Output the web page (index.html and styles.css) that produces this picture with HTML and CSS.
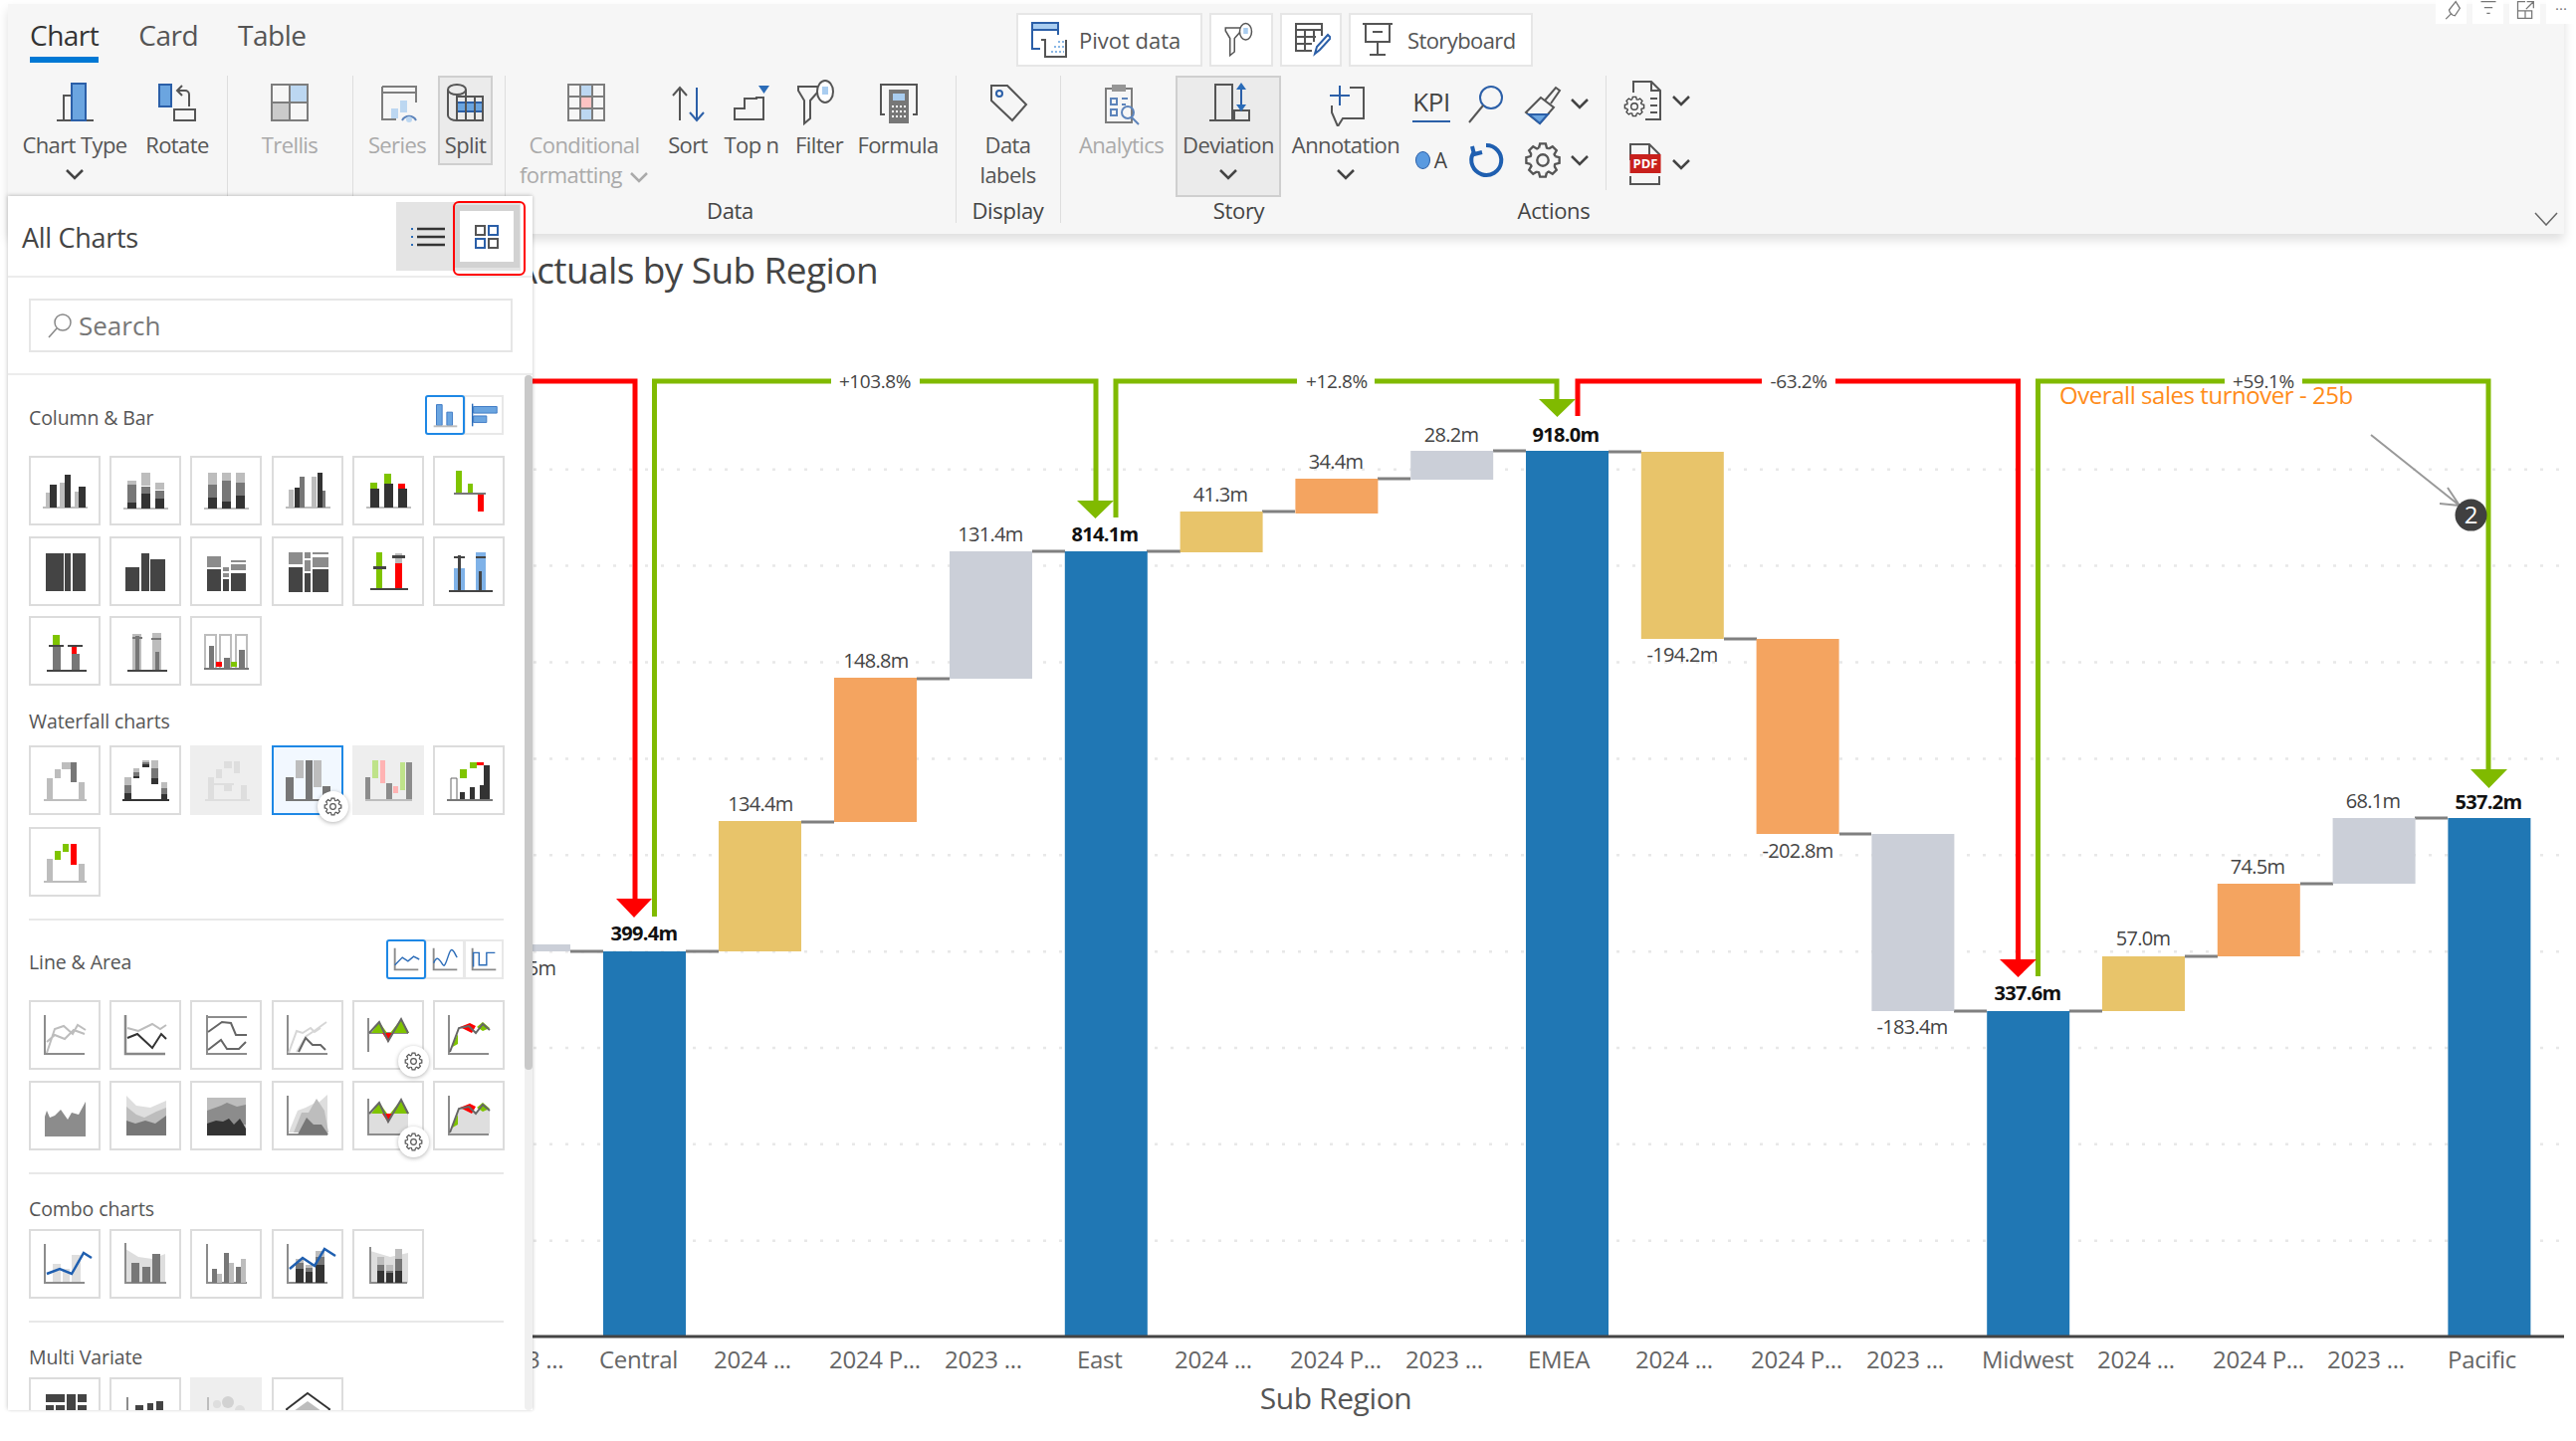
FILE: index.html
```html
<!DOCTYPE html>
<html lang="en">
<head>
<meta charset="utf-8">
<title>Actuals by Sub Region</title>
<link rel="stylesheet" href="styles.css">
</head>
<body>
<svg class="defs" aria-hidden="true">
  <symbol id="gear" viewBox="-12 -12 24 24">
    <path id="gt" d="M-2.5-7.8L-1.8-10.5H1.8L2.5-7.8A8.2 8.2 0 0 1 3.75-7.28"/>
    <use href="#gt" transform="rotate(45)"/><use href="#gt" transform="rotate(90)"/><use href="#gt" transform="rotate(135)"/><use href="#gt" transform="rotate(180)"/><use href="#gt" transform="rotate(225)"/><use href="#gt" transform="rotate(270)"/><use href="#gt" transform="rotate(315)"/>
    <circle r="3.6"/>
  </symbol>
  <symbol id="chev" viewBox="0 0 20 12"><path d="M2 2l8 8 8-8"/></symbol>
  <symbol id="funnel" viewBox="0 0 48 48"><path class="ol" d="M3 8h22l-2 5-8 9v18l-6 5V22L3 12z"/><ellipse class="ws" cx="30" cy="13" rx="8" ry="11"/><rect class="fb" x="27" y="8" width="6" height="8"/></symbol>
</svg>

<div class="win-actions">
  <span class="win-btn"><svg viewBox="0 0 24 24"><path d="M5 23l6-6M9 12l8-10 5 8-6 9-3-1-3-3z"/></svg></span>
  <span class="win-btn"><svg viewBox="0 0 24 24"><path d="M3 2h18M7 9h10M10 16h4"/></svg></span>
  <span class="win-btn"><svg viewBox="0 0 24 24"><path d="M12 2H3v20h17V13H3M12 13v9M14 2h8v8M22 2l-9 9"/></svg></span>
  <span class="win-btn win-dots">•••</span>
</div>

<header class="ribbon">
  <div class="ribbon-top">
    <nav class="tabs">
      <a class="tab active">Chart</a>
      <a class="tab">Card</a>
      <a class="tab">Table</a>
    </nav>
    <div class="tools">
      <button class="tool tool-pivot">
        <svg class="ic-36" viewBox="0 0 36 36"><rect class="fb" x="1" y="1" width="26" height="8"/><path class="bs" d="M1 1h26v7H1zM1 8v19h8M27 8v5"/><path class="ol" d="M10 18h4v17h21V18"/><path class="dots" d="M20 30h13M23 25h10M27 20h6"/></svg>
        Pivot data
      </button>
      <button class="tool tool-ico"><svg class="ic-36" viewBox="0 0 48 48"><use href="#funnel"/></svg></button>
      <button class="tool tool-ico2">
        <svg class="ic-36" viewBox="0 0 36 36"><path class="ol" d="M1 2h26v6H1zM1 8v21h16M1 15h20M1 22h16M10 8v21M19 8v12M27 2v12"/><path class="bs" d="M20 32l2-7 11-12 3 3-11 12z"/></svg>
      </button>
      <button class="tool tool-story">
        <svg class="ic-36" viewBox="0 0 36 36"><path class="ol" d="M1 2h30M4 2v18h24V2M16 20v13M8 33h16M11 10h10"/></svg>
        Storyboard
      </button>
    </div>
  </div>

  <div class="ribbon-body">
    <section class="group g-type">
      <div class="items">
        <div class="item w122"><svg class="ic" viewBox="0 0 48 48"><path class="ol" d="M6 42h37M13 42V17h8"/><rect class="bl" x="21" y="5" width="14" height="37"/></svg><span class="lbl">Chart Type</span><svg class="chev"><use href="#chev"/></svg></div>
        <div class="item w84"><svg class="ic" viewBox="0 0 48 48"><rect class="bl" x="6" y="6" width="12" height="22"/><path class="ol" d="M36 28V16a4 4 0 0 0-4-4H24M29 7l-5 5 5 5"/><rect class="ol" x="21" y="31" width="21" height="11"/></svg><span class="lbl">Rotate</span></div>
      </div>
      <div class="glabel"></div>
    </section>
    <section class="group g-trellis">
      <div class="items">
        <div class="item dis w126"><svg class="ic" viewBox="0 0 48 48"><rect class="fb" x="24" y="6" width="18" height="18"/><rect class="fl" x="6" y="24" width="18" height="18"/><path class="ol" d="M6 6h36v36H6zM24 6v36M6 24h36"/></svg><span class="lbl">Trellis</span></div>
      </div>
      <div class="glabel"></div>
    </section>
    <section class="group g-series">
      <div class="items">
        <div class="item dis w82"><svg class="ic" viewBox="0 0 48 48"><path class="ol" d="M9 8h34v16M9 8v33h14M9 14h34"/><rect class="fb" x="18" y="30" width="7" height="10"/><rect class="fb" x="27" y="22" width="7" height="12"/><path class="bs" d="M29 42a8 8 0 0 1 14 0"/><circle class="fb" cx="36" cy="41" r="3"/></svg><span class="lbl">Series</span></div>
        <div class="item on w55"><svg class="ic" viewBox="0 0 48 48"><ellipse class="ol" cx="15" cy="11" rx="9" ry="5"/><path class="ol" d="M6 11v26a9 5 0 0 0 9 5M24 11v9"/><rect class="bl" x="15" y="24" width="26" height="9"/><path class="ol" d="M15 18h26v24H15zM24 18v24M33 18v24"/></svg><span class="lbl">Split</span></div>
      </div>
      <div class="glabel"></div>
    </section>
    <section class="group g-data">
      <div class="items">
        <div class="item dis w134"><svg class="ic" viewBox="0 0 48 48"><rect class="fb" x="20" y="6" width="12" height="12"/><rect class="fb" x="20" y="30" width="12" height="12"/><rect class="fh" x="20" y="18" width="12" height="12"/><path class="ol" d="M8 6h36v36H8zM20 6v36M32 6v36M8 18h36M8 30h36"/></svg><span class="lbl">Conditional</span><span class="lbl">formatting <svg class="chev inl"><use href="#chev"/></svg></span></div>
        <div class="item w74"><svg class="ic" viewBox="0 0 48 48"><path class="ol" d="M16 42V10M9 17l7-8 7 8"/><path class="bs" d="M33 9v33M26 34l7 8 7-8"/></svg><span class="lbl">Sort</span></div>
        <div class="item w54"><svg class="ic" viewBox="0 0 48 48"><path class="ol" d="M7 41V30h10V20h12V19h7v22z"/><path class="fbd" d="M31 7h11l-5.500 8z"/></svg><span class="lbl">Top n</span></div>
        <div class="item w82"><svg class="ic" viewBox="0 0 48 48"><use href="#funnel"/></svg><span class="lbl">Filter</span></div>
        <div class="item w76"><svg class="ic" viewBox="0 0 48 48"><path class="ol" d="M11 36H7V6h36v30h-4"/><rect class="fg" x="15" y="11" width="20" height="34"/><rect class="fb" x="19" y="15" width="12" height="7"/><path class="dots-w" d="M18 28h15M18 33h15M18 38h15"/></svg><span class="lbl">Formula</span></div>
      </div>
      <div class="glabel">Data</div>
    </section>
    <section class="group g-display">
      <div class="items">
        <div class="item w105"><svg class="ic" viewBox="0 0 48 48"><path class="ol" d="M7 7h16l19 19-14 16L7 22z"/><circle class="bs" cx="15" cy="15" r="3"/></svg><span class="lbl">Data</span><span class="lbl">labels</span></div>
      </div>
      <div class="glabel">Display</div>
    </section>
    <section class="group g-story">
      <div class="items">
        <div class="item dis w109"><svg class="ic" viewBox="0 0 48 48"><path class="ol" d="M8 10h26v34H8z"/><rect class="fg" x="14" y="6" width="14" height="7"/><path class="bs" d="M13 20h6v6h-6zM13 31h6v6h-6zM24 20h6M24 26h4"/><circle class="bs" cx="30" cy="34" r="6"/><path class="bs" d="M34 39l7 7"/></svg><span class="lbl">Analytics</span></div>
        <div class="item on tall w106"><svg class="ic" viewBox="0 0 48 48"><path class="ol" d="M5 42h40M11 42V6h17v36"/><rect class="ol" x="30" y="32" width="15" height="10"/><path class="bs" d="M37 9v22"/><path class="fbd" d="M37 4l5 7H32zM37 33l5-7H32z"/></svg><span class="lbl">Deviation</span><svg class="chev"><use href="#chev"/></svg></div>
        <div class="item w130"><svg class="ic" viewBox="0 0 48 48"><path class="ol" d="M28 9h14v31H21l-5 8-6-14V27"/><path class="bs" d="M8 17h20M18 7v20"/></svg><span class="lbl">Annotation</span><svg class="chev"><use href="#chev"/></svg></div>
      </div>
      <div class="glabel">Story</div>
    </section>
    <section class="group g-actions">
      <div class="items">
        <div class="act-grid">
          <div class="act kpi"><span>KPI</span></div>
          <div class="act"><svg class="ic-44" viewBox="0 0 44 44"><circle class="bs" cx="27" cy="16" r="11"/><path class="ol" d="M19 24L5 41"/></svg></div>
          <div class="act"><svg class="ic-44" viewBox="0 0 44 44"><path class="ol" d="M20 16L5 31l14 11 14-16zM24 19L35 6l4 3-9 13"/><path class="bl" d="M8 33h19l-8 9z"/></svg></div>
          <div class="act"><svg class="chev"><use href="#chev"/></svg></div>
          <div class="act legend"><i></i><span>A</span></div>
          <div class="act"><svg class="ic-44" viewBox="0 0 44 44"><path class="bs2" d="M22 7a15 15 0 1 1-13 8"/><path class="bs2" d="M8 8l2 8 8-2"/></svg></div>
          <div class="act"><svg class="gear-l"><use href="#gear"/></svg></div>
          <div class="act"><svg class="chev"><use href="#chev"/></svg></div>
        </div>
        <div class="act-grid2">
          <div class="act"><svg class="ic-44" viewBox="0 0 44 44"><path class="ol" d="M10 14V3h18l9 9v29H22M28 3v9h9M27 20h7M27 27h7M27 34h7"/><svg x="0" y="17" width="22" height="22" viewBox="-12 -12 24 24" class="gear-in"><use href="#gt"/><use href="#gt" transform="rotate(45)"/><use href="#gt" transform="rotate(90)"/><use href="#gt" transform="rotate(135)"/><use href="#gt" transform="rotate(180)"/><use href="#gt" transform="rotate(225)"/><use href="#gt" transform="rotate(270)"/><use href="#gt" transform="rotate(315)"/><circle r="3.6"/></svg></svg></div>
          <div class="act"><svg class="chev"><use href="#chev"/></svg></div>
          <div class="act pdf"><svg class="ic-44" viewBox="0 0 44 44"><path class="ol" d="M7 18V2h19l10 10v8M26 2v10M7 34v8h29v-8"/></svg><span class="pdf-tag">PDF</span></div>
          <div class="act"><svg class="chev"><use href="#chev"/></svg></div>
        </div>
      </div>
      <div class="glabel">Actions</div>
    </section>
  </div>
  <svg class="collapse" viewBox="0 0 24 14"><path d="M1 1l11 12L23 1"/></svg>
</header>

<aside class="panel">
  <div class="panel-head">
    <h2>All Charts</h2>
    <div class="view-switch">
      <span class="vs-btn"><svg viewBox="0 0 36 20" class="vs-list"><path class="vs-dot" d="M1 2h2M1 10h2M1 18h2"/><path class="vs-line" d="M7 2h28M7 10h28M7 18h28"/></svg></span>
      <span class="vs-btn active"><svg viewBox="0 0 24 24" class="vs-grid"><path class="ol" d="M1 1h9v9H1zM14 14h9v9h-9z"/><path class="bs" d="M14 1h9v9h-9zM1 14h9v9H1z"/></svg></span>
    </div>
  </div>
  <div class="panel-search">
    <div class="search"><svg viewBox="0 0 26 26"><circle cx="16" cy="10" r="8"/><path d="M10 16L2 25"/></svg><span>Search</span></div>
  </div>
  <div class="panel-body">
    <div class="scroll-track"><div class="scroll-thumb"></div></div>

    <div class="sec-row">
      <h3>Column &amp; Bar</h3>
      <div class="seg">
        <span class="seg-btn active"><svg viewBox="0 0 36 36"><path class="fb-s" d="M9 7h6v22H9zM20 15h6v14h-6z"/><path class="sl" d="M6 30h25"/></svg></span>
        <span class="seg-btn"><svg viewBox="0 0 36 36"><path class="fb-s" d="M7 9h25v7H7zM7 19h14v7H7z"/><path class="sb" d="M6 6v24"/></svg></span>
      </div>
    </div>
    <div class="tiles tight">
      <div class="tile"><svg viewBox="0 0 72 70"><path class="fl" d="M14 51h45v2H14zM17 37h4v15h-4zM31 27h5v25h-5zM46 36h4v16h-4z"/><path class="fk" d="M21 29h7v23h-7zM36 19h6v33h-6zM50 31h7v21h-7z"/></svg></div>
      <div class="tile"><svg viewBox="0 0 72 70"><path class="fl" d="M14 52h45v2H14zM18 25h9v4h-9zM32 17h9v13h-9zM46 27h9v7h-9z"/><path class="fg" d="M18 29h9v18h-9zM32 31h9v7h-9zM46 35h9v8h-9z"/><path class="fk" d="M18 47h9v6h-9zM32 38h9v15h-9zM46 43h9v10h-9z"/></svg></div>
      <div class="tile"><svg viewBox="0 0 72 70"><path class="fl" d="M14 52h45v2H14zM18 17h9v12h-9zM32 17h9v8h-9zM46 17h9v10h-9z"/><path class="fg" d="M18 29h9v13h-9zM32 25h9v21h-9zM46 27h9v13h-9z"/><path class="fk" d="M18 42h9v11h-9zM32 46h9v7h-9zM46 40h9v13h-9z"/></svg></div>
      <div class="tile"><svg viewBox="0 0 72 70"><path class="fl" d="M14 51h45v2H14zM17 34h5v18h-5zM40 21h5v31h-5z"/><path class="fg" d="M28 21h5v31h-5zM50 35h4v17h-4z"/><path class="fk" d="M23 32h5v20h-5zM46 17h5v35h-5z"/></svg></div>
      <div class="tile"><svg viewBox="0 0 72 70"><path class="fl" d="M14 51h45v2H14z"/><path class="fk" d="M18 33h9v19h-9zM32 28h9v24h-9zM46 33h9v19h-9z"/><path class="fv" d="M18 27h7v6h-7zM32 18h7v10h-7z"/><path class="fr" d="M46 28h7v5h-7z"/></svg></div>
      <div class="tile"><svg viewBox="0 0 72 70"><path class="fv" d="M23 15h6v23h-6zM35 28h5v10h-5z"/><path class="fg" d="M21 37h32v2H21z"/><path class="fr" d="M45 39h6v17h-6z"/></svg></div>
      <div class="tile"><svg viewBox="0 0 72 70"><path class="fd" d="M17 17h18v38H17zM36 17h6v38h-6zM44 17h13v38H44z"/></svg></div>
      <div class="tile"><svg viewBox="0 0 72 70"><path class="fd" d="M16 31h14v24H16zM32 17h8v38h-8zM41 23h15v32H41z"/></svg></div>
      <div class="tile"><svg viewBox="0 0 72 70"><path class="fm" d="M17 20h14v11H17zM33 31h6v4h-6zM33 37h6v4h-6zM41 24h15v2H41zM41 28h15v6H41z"/><path class="fd" d="M17 33h14v22H17zM33 43h6v12h-6zM41 37h15v18H41z"/></svg></div>
      <div class="tile"><svg viewBox="0 0 72 70"><path class="fm" d="M17 16h14v12H17zM33 16h6v6h-6zM33 24h6v11h-6zM41 16h16v2H41zM41 21h16v10H41z"/><path class="fd" d="M17 31h14v25H17zM33 37h6v19h-6zM41 33h16v23H41z"/></svg></div>
      <div class="tile"><svg viewBox="0 0 72 70"><path class="fv" d="M24 16h6v37h-6z"/><path class="fl" d="M43 17h7v10h-7z"/><path class="fr" d="M43 27h7v26h-7z"/><path class="fd" d="M18 52h38v2H18zM21 30h13v3H21zM40 19h13v3H40z"/></svg></div>
      <div class="tile"><svg viewBox="0 0 72 70"><path class="fb2" d="M21 32h11v23H21zM43 16h10v39H43z"/><path class="fd" d="M16 54h44v2H16zM25 19h3v36h-3zM21 20h11v2H21zM46 35h3v20h-3zM43 20h10v2H43z"/></svg></div>
      <div class="tile"><svg viewBox="0 0 72 70"><path class="fv" d="M24 19h7v10h-7z"/><path class="fr" d="M43 31h5v7h-5z"/><path class="fg" d="M24 31h8v24h-8zM43 38h8v17h-8z"/><path class="fd" d="M18 54h40v2H18zM20 29h15v2H20zM39 29h15v2H39z"/></svg></div>
      <div class="tile"><svg viewBox="0 0 72 70"><path class="fl" d="M23 18h9v37h-9zM43 17h9v38h-9z"/><path class="fg" d="M26 20h4v35h-4zM46 36h4v19h-4zM42 22h10v2H42zM23 21h10v2H23z"/><path class="fd" d="M18 54h40v2H18z"/></svg></div>
      <div class="tile"><svg viewBox="0 0 72 70"><path class="sl" d="M15 53V19h11v34M30 53V19h11v34M46 53V19h11v34"/><path class="fg" d="M19 30h5v23h-5zM34 42h6v11h-6zM49 34h6v19h-6zM14 52h45v2H14z"/><path class="fr" d="M26 46h6v5h-6z"/><path class="fv" d="M41 46h6v5h-6z"/></svg></div>
    </div>

    <h3 class="sec-title wf">Waterfall charts</h3>
    <div class="tiles">
      <div class="tile"><svg viewBox="0 0 72 70"><path class="fl" d="M15 54h43v2H15zM18 33h6v22h-6zM26 24h6v9h-6zM33 17h9v7h-9zM50 37h6v18h-6z"/><path class="fg" d="M42 17h6v20h-6z"/></svg></div>
      <div class="tile"><svg viewBox="0 0 72 70"><path class="fl" d="M15 32h7v8h-7zM24 23h6v4h-6zM33 15h7v2h-7zM42 15h7v8h-7zM52 37h6v6h-6z"/><path class="fg" d="M15 40h7v8h-7zM24 27h6v4h-6zM33 17h7v2h-7zM42 23h7v10h-7zM52 43h6v6h-6z"/><path class="fk" d="M13 54h47v2H13zM15 48h7v7h-7zM24 31h6v2h-6zM33 19h7v3h-7zM42 33h7v6h-7zM52 49h6v6h-6z"/></svg></div>
      <div class="tile off"><svg viewBox="0 0 72 70"><path class="fx" d="M15 54h45v2H15zM18 32h6v22h-6zM26 24h6v9h-6zM34 16h8v7h-8zM44 16h6v12h-6zM51 40h6v15h-6zM24 38h20v2H24zM34 38h8v8H34z"/></svg></div>
      <div class="tile sel">
        <svg viewBox="0 0 72 70"><path class="fg" d="M14 54h45v2H14zM14 32h8v22h-8zM34 15h7v40h-7zM51 41h8v14h-8z"/><path class="fl" d="M24 15h8v18h-8zM42 15h8v27h-8z"/></svg>
        <span class="badge"><svg><use href="#gear"/></svg></span>
      </div>
      <div class="tile off"><svg viewBox="0 0 72 70"><path class="fm" d="M13 32h5v23h-5zM34 38h6v17h-6zM54 17h6v38h-6z"/><path class="fe" d="M20 15h6v18h-6zM48 17h5v28h-5z"/><path class="fh" d="M28 15h5v23h-5zM41 41h5v7h-5z"/><path class="fl" d="M13 54h47v2H13z"/></svg></div>
      <div class="tile"><svg viewBox="0 0 72 70"><path class="ok" d="M18 33h6v22h-6z"/><path class="fk" d="M27 47h5v8h-5zM37 42h5v13h-5zM47 40h5v15h-5zM51 20h6v35h-6z"/><path class="fv" d="M27 24h7v9h-7zM37 17h7v6h-7z"/><path class="fr" d="M44 17h7v3h-7z"/><path class="fg" d="M14 54h46v2H14z"/></svg></div>
      <div class="tile"><svg viewBox="0 0 72 70"><path class="fl" d="M15 54h43v2H15zM18 32h6v23h-6zM50 37h6v18h-6z"/><path class="fv" d="M26 24h6v9h-6zM34 17h6v8h-6z"/><path class="fr" d="M42 17h6v21h-6z"/></svg></div>
    </div>

    <hr class="divider">

    <div class="sec-row">
      <h3>Line &amp; Area</h3>
      <div class="seg">
        <span class="seg-btn active"><svg viewBox="0 0 36 36"><path class="sg-t" d="M6 6v23h25"/><path class="sb" d="M6 24l8-8 6 4 6-5 6 3"/></svg></span>
        <span class="seg-btn"><svg viewBox="0 0 36 36"><path class="sg-t" d="M6 6v23h25"/><path class="sb" d="M6 22c4-10 7-2 10 2s6-16 9-16 4 6 6 8"/></svg></span>
        <span class="seg-btn"><svg viewBox="0 0 36 36"><path class="sg-t" d="M6 6v23h25"/><path class="sb" d="M7 26V11h6v13h8V11h9"/></svg></span>
      </div>
    </div>
    <div class="tiles">
      <div class="tile"><svg viewBox="0 0 72 70"><path class="sg-t" d="M16 15v39h40"/><path class="sl" d="M18 53l8-24 9-3 9 8 5-9 8 5M18 42l8-7 10 4 9-9 11 4"/></svg></div>
      <div class="tile"><svg viewBox="0 0 72 70"><path class="sm" d="M16 15v39h40"/><path class="sl" d="M18 28l11 3 14-7 8 5 6-4"/><path class="sk" d="M18 38l10-4 15 14 9-14 5 5"/></svg></div>
      <div class="tile"><svg viewBox="0 0 72 70"><path class="sg-t" d="M17 15v39h40M17 17h40"/><path class="sg" d="M18 32l14-10 9 1 5 12h11M18 50l13-10 6 9h12l7-7"/></svg></div>
      <div class="tile"><svg viewBox="0 0 72 70"><path class="sg-t" d="M16 15v39h40"/><path class="sl2" d="M17 53l8-22 6 2 8-5 4 4 6-4M25 52l10-16 9-6 11-8"/><path class="sg" d="M27 52l7-14 7 7 8 0 5 5"/></svg></div>
      <div class="tile"><svg viewBox="0 0 72 70"><path class="sg-t" d="M16 18v34M16 33h40"/><path class="fv" d="M19 33l8-11 8 11zM38 33l11-14 8 14z"/><path class="fr" d="M30 33h11l-5 9z"/><path class="sg" d="M17 33l10-11 9 19 13-22 7 14"/></svg><span class="badge"><svg><use href="#gear"/></svg></span></div>
      <div class="tile"><svg viewBox="0 0 72 70"><path class="sg-t" d="M16 15v39h40"/><path class="fv" d="M18 48l7-14v10zM44 27l6-5 7 6-7 3z"/><path class="fr" d="M27 27l10-4 6 3-4 7-6-3z"/><path class="sg" d="M17 52l9-24 10-2 7 7 7-9 7 6"/></svg></div>
      <div class="tile"><svg viewBox="0 0 72 70"><path class="fm" d="M16 14v42h41V21l-7 13-7-2-4 7-7-10-6 6-5 2-3-7-2 6z"/></svg></div>
      <div class="tile"><svg viewBox="0 0 72 70"><path class="fx" d="M17 15v21l16 3 8 2 16-9V20l-16 7-14-2z"/><path class="fl" d="M17 26v20h40V27l-10 4-12 6-8-3z"/><path class="fg" d="M17 55V40l9 3 10-3 10 3 11-8v20z"/></svg></div>
      <div class="tile"><svg viewBox="0 0 72 70"><path class="fl" d="M17 17h39v36H17z"/><path class="fm" d="M17 30l14-5 6-3 10 4 9-2v20H17z"/><path class="fk" d="M17 55V43l9-3 7 1 6-3 5 6 6-6 6 10v7z"/></svg></div>
      <div class="tile"><svg viewBox="0 0 72 70"><path class="sg-t" d="M16 15v39h40"/><path class="fx" d="M17 52l9-22 8-3 8-4 5-1 9-8v38z"/><path class="fl" d="M22 52l8-20 7 0 8-14 8 12 4 22z"/><path class="fg" d="M26 54l9-17 7 7 8 0 7 10z"/></svg></div>
      <div class="tile"><svg viewBox="0 0 72 70"><path class="fx" d="M16 33h40v20H16z"/><path class="sg-t" d="M16 18v36h40"/><path class="fv" d="M19 33l8-11 8 11zM38 33l11-14 8 14z"/><path class="fr" d="M30 33h11l-5 9z"/><path class="sg" d="M17 33l10-11 9 19 13-22 7 14"/></svg><span class="badge"><svg><use href="#gear"/></svg></span></div>
      <div class="tile"><svg viewBox="0 0 72 70"><path class="fx" d="M17 53l9-25 10-2 7 7 7-9 7 6v23z"/><path class="sg-t" d="M16 15v39h40"/><path class="fv" d="M18 48l7-14v10zM44 27l6-5 7 6-7 3z"/><path class="fr" d="M27 27l10-4 6 3-4 7-6-3z"/><path class="sg" d="M17 52l9-24 10-2 7 7 7-9 7 6"/></svg></div>
    </div>

    <hr class="divider">

    <h3 class="sec-title">Combo charts</h3>
    <div class="tiles">
      <div class="tile"><svg viewBox="0 0 72 70"><path class="fx" d="M24 35h8v19h-8zM34 40h7v14h-7zM43 26h9v28h-9z"/><path class="sg-t" d="M16 15v39h40"/><path class="sb2" d="M18 45l13-5 12 5 12-21 8 5"/></svg></div>
      <div class="tile"><svg viewBox="0 0 72 70"><path class="fx" d="M16 20l13 8 14 2 13-5v29H16z"/><path class="sg-t" d="M16 14v40h41"/><path class="fg" d="M22 34h8v20h-8zM33 38h8v16h-8zM43 25h8v29h-8z"/></svg></div>
      <div class="tile"><svg viewBox="0 0 72 70"><path class="sg-t" d="M17 15v39h40"/><path class="fg" d="M22 40h5v14h-5zM34 24h5v30h-5zM46 38h5v16h-5z"/><path class="fl" d="M27 45h5v9h-5zM39 34h5v20h-5zM51 30h5v24h-5z"/></svg></div>
      <div class="tile"><svg viewBox="0 0 72 70"><path class="sg-t" d="M16 15v39h40"/><path class="fl" d="M24 30h8v4h-8zM34 36h7v3h-7zM44 22h9v6h-9z"/><path class="fg" d="M24 34h8v6h-8zM34 39h7v4h-7zM44 28h9v8h-9z"/><path class="fk" d="M24 40h8v14h-8zM34 43h7v11h-7zM44 36h9v18h-9z"/><path class="sb2" d="M18 40l13-11 12 8 10-17 11 7"/></svg></div>
      <div class="tile"><svg viewBox="0 0 72 70"><path class="fx" d="M18 22l20 6 18-4v30H18z"/><path class="sg-t" d="M18 18v36h37"/><path class="fl" d="M25 28h7v8h-7zM34 36h7v6h-7zM43 20h7v10h-7z"/><path class="fg" d="M25 36h7v6h-7zM34 42h7v2h-7zM43 30h7v12h-7z"/><path class="fk" d="M25 42h7v12h-7zM34 44h7v10h-7zM43 42h7v12h-7z"/></svg></div>
    </div>

    <hr class="divider">

    <h3 class="sec-title">Multi Variate</h3>
    <div class="tiles">
      <div class="tile"><svg viewBox="0 0 72 70"><path class="fd" d="M17 17h19v8H17zM38 17h9v30h-9zM49 17h9v8h-9zM17 28h8v20h-8zM27 28h9v20h-9zM49 28h9v20h-9z"/></svg></div>
      <div class="tile"><svg viewBox="0 0 72 70"><path class="sg-t" d="M18 20v34"/><path class="fd" d="M26 28h8v12h-8zM38 26h6v14h-6zM47 24h7v16h-7z"/></svg></div>
      <div class="tile off"><svg viewBox="0 0 72 70"><path class="sl" d="M18 20v34"/><circle class="fx" cx="27" cy="27" r="4"/><circle class="fl2" cx="38" cy="25" r="6"/><circle class="fx" cx="50" cy="33" r="5"/></svg></div>
      <div class="tile"><svg viewBox="0 0 72 70"><path class="sk" d="M36 16L58 32 48 56H24L15 32z"/><path class="fl" d="M36 24l14 10-6 14H28l-6-14z"/></svg></div>
    </div>
  </div>
</aside>

<main class="chart-wrap">
  <svg class="chart" viewBox="0 235 2588 1213" role="img" aria-label="Actuals by Sub Region waterfall chart">
    <text class="c-title" x="882" y="285" text-anchor="end">Actuals by Sub Region</text>

    <path class="grid" d="M536 471.700H2574M536 568.600H2574M536 665.500H2574M536 762.400H2574M536 859.300H2574M536 956.200H2574M536 1053H2574M536 1149.800H2574M536 1246.700H2574"/>

    <g class="conn">
      <path d="M573 956H606M689 956H722M805 826H838M921 682H954M1037 554H1070M1152 554H1186M1268 514H1301M1384 481H1417M1500 453H1533M1616 454H1649M1732 642H1765M1848 838H1880M1963 1016H1996M2079 1016H2112M2195 961H2228M2311 888H2344M2426 822H2459"/>
    </g>

    <g class="b-total">
      <rect x="606" y="956" width="83" height="387"/>
      <rect x="1069.800" y="554" width="83" height="789"/>
      <rect x="1533" y="453" width="83" height="890"/>
      <rect x="1996.200" y="1016" width="83" height="327"/>
      <rect x="2459.400" y="822" width="83" height="521"/>
    </g>
    <g class="b-gold">
      <rect x="722" y="825" width="83" height="131"/>
      <rect x="1185.600" y="514" width="83" height="41"/>
      <rect x="1648.800" y="454" width="83" height="188"/>
      <rect x="2112" y="961" width="83" height="55"/>
    </g>
    <g class="b-orange">
      <rect x="838" y="681" width="83" height="145"/>
      <rect x="1301.400" y="481" width="83" height="35"/>
      <rect x="1764.600" y="642" width="83" height="196"/>
      <rect x="2227.800" y="888" width="83" height="73"/>
    </g>
    <g class="b-grey">
      <rect x="490" y="949" width="83" height="7"/>
      <rect x="954" y="554" width="83" height="128"/>
      <rect x="1417.200" y="453" width="83" height="29"/>
      <rect x="1880.400" y="838" width="83" height="178"/>
      <rect x="2343.600" y="822" width="83" height="66"/>
    </g>

    <path class="axis" d="M530 1343H2576"/>

    <path class="line red" d="M530 383H638V904"/>
    <path class="line green" d="M657.500 921V383H835M924 383H1101V504"/>
    <path class="line green" d="M1121 520V383H1303M1381 383H1564V402"/>
    <path class="line red" d="M1585 418V383H1770M1844 383H2027.500V965"/>
    <path class="line green" d="M2047.500 981V383H2235M2313 383H2500V774"/>

    <path class="fill-red" d="M619 903h36l-18 19zM2009 964h37l-18.500 18z"/>
    <path class="fill-green" d="M1082 503h37l-18.500 18zM1546 401h37l-18.500 18zM2482 773h37l-18.500 19z"/>

    <g class="pct" text-anchor="middle">
      <text x="879" y="390">+103.8%</text>
      <text x="1343" y="390">+12.8%</text>
      <text x="1807" y="390">-63.2%</text>
      <text x="2274" y="390">+59.1%</text>
    </g>

    <text class="note" x="2069" y="406">Overall sales turnover - 25b</text>
    <path class="ann" d="M2382 437L2471 508M2459 490L2471 508 2451 506"/>
    <circle class="ann-dot" cx="2482.500" cy="517.600" r="16"/>
    <text class="ann-num" x="2482.500" y="526" text-anchor="middle">2</text>

    <g class="val" text-anchor="middle">
      <text x="544" y="980">5m</text>
      <text x="764" y="815">134.4m</text>
      <text x="880" y="671">148.8m</text>
      <text x="995" y="544">131.4m</text>
      <text x="1226" y="504">41.3m</text>
      <text x="1342" y="471">34.4m</text>
      <text x="1458" y="444">28.2m</text>
      <text x="1690" y="665">-194.2m</text>
      <text x="1806" y="862">-202.8m</text>
      <text x="1921" y="1039">-183.4m</text>
      <text x="2153" y="950">57.0m</text>
      <text x="2268" y="878">74.5m</text>
      <text x="2384" y="812">68.1m</text>
    </g>
    <g class="val total" text-anchor="middle">
      <text x="647" y="945">399.4m</text>
      <text x="1110" y="544">814.1m</text>
      <text x="1573" y="444">918.0m</text>
      <text x="2037" y="1005">337.6m</text>
      <text x="2500" y="813">537.2m</text>
    </g>

    <g class="cat">
      <text x="529" y="1375">3 ...</text>
      <text x="602" y="1375">Central</text>
      <text x="717" y="1375">2024 ...</text>
      <text x="833" y="1375">2024 P...</text>
      <text x="949" y="1375">2023 ...</text>
      <text x="1082" y="1375">East</text>
      <text x="1180" y="1375">2024 ...</text>
      <text x="1296" y="1375">2024 P...</text>
      <text x="1412" y="1375">2023 ...</text>
      <text x="1535" y="1375">EMEA</text>
      <text x="1643" y="1375">2024 ...</text>
      <text x="1759" y="1375">2024 P...</text>
      <text x="1875" y="1375">2023 ...</text>
      <text x="1991" y="1375">Midwest</text>
      <text x="2107" y="1375">2024 ...</text>
      <text x="2223" y="1375">2024 P...</text>
      <text x="2338" y="1375">2023 ...</text>
      <text x="2459" y="1375">Pacific</text>
    </g>
    <text class="axis-title" x="1342" y="1416" text-anchor="middle">Sub Region</text>
  </svg>
</main>
</body>
</html>
```
FILE: styles.css
```css
* { box-sizing: border-box; }
html, body { margin: 0; padding: 0; }
body {
  width: 2588px;
  height: 1448px;
  overflow: hidden;
  position: relative;
  background: #fff;
  font-family: "Open Sans", "Liberation Sans", sans-serif;
  color: #444;
}
.defs { position: absolute; width: 0; height: 0; }
#gear, .gear-in { fill: none; stroke: currentColor; stroke-width: 1.5; }
#gt { fill: none; }

/* shared icon paints */
.ol { fill: none; stroke: #555; stroke-width: 2; }
.ws { fill: #fff; stroke: #555; stroke-width: 2; }
.bs { fill: none; stroke: #2b5fa8; stroke-width: 2; }
.bs2 { fill: none; stroke: #1f5fb0; stroke-width: 4; }
.bl { fill: #6ba5e0; stroke: #2b5fa8; stroke-width: 2; }
.fb { fill: #a9cdf0; }
.fb2 { fill: #7fb2e8; }
.fbd { fill: #2b6cb8; }
.fh { fill: #ffb3b3; }
.fg { fill: #777; }
.fk { fill: #333; }
.fd { fill: #444; }
.fm { fill: #8c8c8c; }
.fl { fill: #bdbdbd; }
.fl2 { fill: #d2d2d2; }
.fx { fill: #dedede; }
.fr { fill: #f00; }
.fv { fill: #7fc400; }
.fe { fill: #bfe38a; }
.ok { fill: #fff; stroke: #666; stroke-width: 1; }
.sl { fill: none; stroke: #bdbdbd; stroke-width: 2; }
.sl2 { fill: none; stroke: #d6d6d6; stroke-width: 2; }
.sg { fill: none; stroke: #666; stroke-width: 2; }
.sm { fill: none; stroke: #888; stroke-width: 2.500; }
.sg-t { fill: none; stroke: #8c8c8c; stroke-width: 2; }
.sk { fill: none; stroke: #333; stroke-width: 2; }
.sb { fill: none; stroke: #2b6cb8; stroke-width: 1.500; }
.sb2 { fill: none; stroke: #1f5fb0; stroke-width: 2.500; }
.fb-s { fill: #6ba5e0; stroke: #3b78c4; stroke-width: 1; }
.dots { fill: none; stroke: #8ab8e6; stroke-width: 2; stroke-dasharray: 2 2; }
.dots-w { fill: none; stroke: #fff; stroke-width: 2; stroke-dasharray: 2 2; }

/* window actions */
.win-actions {
  position: absolute; top: 0; left: 2447px; z-index: 5;
  display: flex; gap: 6px;
}
.win-btn { width: 31px; height: 24px; background: #fff; display: flex; justify-content: center; }
.win-btn svg { width: 20px; height: 20px; fill: none; stroke: #777; stroke-width: 1.500; }
.win-dots { font-size: 8px; letter-spacing: 1px; color: #777; line-height: 18px; }

/* ribbon */
.ribbon {
  position: relative; z-index: 2;
  margin: 4px 12px 0 8px;
  height: 231px;
  background: #f6f6f6;
  box-shadow: 0 6px 10px rgba(0,0,0,.13);
}
.ribbon-top { display: flex; height: 72px; }
.tabs { display: flex; gap: 40px; padding-left: 22px; width: 1013px; }
.tab { font-size: 28px; line-height: 62px; height: 59px; color: #555; letter-spacing: -.5px; }
.tab.active { color: #333; border-bottom: 6px solid #0078d4; font-weight: 500; }
.tools { display: flex; gap: 7px; padding-top: 9px; height: 63px; }
.tool {
  height: 54px; background: #fff; border: 2px solid #e6e6e6; padding: 0;
  display: flex; align-items: center; justify-content: flex-start;
  font: 22px "Open Sans", sans-serif; color: #555; white-space: nowrap;
}
.ic-36 { width: 36px; height: 36px; flex: none; }
.tool-pivot { width: 187px; gap: 12px; padding-left: 13px; }
.tool-ico { width: 64px; padding-left: 12px; }
.tool-ico2 { width: 62px; padding-left: 13px; }
.tool-story { width: 185px; gap: 10px; padding-left: 11px; letter-spacing: -.6px; }

.ribbon-body { display: flex; height: 159px; }
.group { display: flex; flex-direction: column; position: relative; }
.group + .group::before {
  content: ""; position: absolute; left: 0; top: 0; width: 1px; height: 148px; background: #dedede;
}
.g-story + .g-actions::before { display: none; }
.items { display: flex; height: 122px; }
.glabel { text-align: center; font-size: 22px; line-height: 26px; color: #444; letter-spacing: -.3px; }
.g-type { width: 220px; padding-left: 6px; }
.g-trellis { width: 126px; }
.g-series { width: 153px; padding-left: 4px; }
.g-data { width: 453px; padding-left: 13px; }
.g-data .glabel { margin-left: -13px; }
.g-display { width: 105px; }
.g-story { width: 352px; padding-left: 7px; }
.g-actions { width: 288px; }
.item {
  display: flex; flex-direction: column; align-items: center;
  font-size: 22px; color: #555; padding-top: 3px; letter-spacing: -.6px; white-space: nowrap;
}
.ic { width: 48px; height: 48px; flex: none; margin-bottom: 3px; }
.lbl { line-height: 30px; }
.item.dis { color: #aaa; }
.item.dis .ic { opacity: .75; }
.item.on { background: #ebebeb; outline: 2px solid #cfcfcf; outline-offset: -2px; height: 90px; }
.item.on.tall { height: 122px; }
.w54 { width: 54px; } .w55 { width: 55px; } .w74 { width: 74px; } .w76 { width: 76px; }
.w82 { width: 82px; } .w84 { width: 84px; } .w105 { width: 105px; } .w106 { width: 106px; }
.w109 { width: 109px; } .w122 { width: 122px; } .w126 { width: 126px; } .w130 { width: 130px; }
.w134 { width: 134px; }
.chev { width: 20px; height: 12px; fill: none; stroke: #444; stroke-width: 2.500; margin-top: 9px; flex: none; }
.chev.inl { margin: 0 0 0 2px; stroke: #aaa; }

.act-grid {
  display: grid; width: 196px; height: 114px;
  grid-template-columns: 42px 68px 46px 28px;
  grid-template-rows: 56px 57px;
}
.act-grid2 {
  display: grid; width: 92px; height: 122px; padding-left: 20px;
  grid-template-columns: 40px 32px;
  grid-template-rows: 49px 80px;
  position: relative;
}
.act-grid2::before {
  content: ""; position: absolute; left: 0; top: 0; width: 1px; height: 115px; background: #dedede;
}
.act { display: flex; align-items: center; justify-content: center; position: relative; }
.act .chev { margin: 0; }
.ic-44 { width: 44px; height: 44px; flex: none; }
.kpi span {
  font-size: 26px; line-height: 34px; color: #444;
  border-bottom: 2px solid #2b5fa8; letter-spacing: -.5px; padding-bottom: 2px;
}
.legend { gap: 4px; }
.legend i { width: 15px; height: 18px; border-radius: 50%; background: #5a9ae0; border: 1px solid #2b5fa8; }
.legend span { font-size: 21px; color: #444; }
.gear-l { width: 38px; height: 38px; color: #555; }
.pdf-tag {
  position: absolute; left: 50%; top: 30px; transform: translateX(-50%);
  background: #c8201c; color: #fff; font-size: 13px; font-weight: 700; line-height: 19px; padding: 0 3px;
}
.collapse {
  position: absolute; right: 6px; bottom: 8px; width: 24px; height: 14px;
  fill: none; stroke: #666; stroke-width: 1.500;
}

/* chart type panel */
.panel {
  position: absolute; z-index: 3; left: 8px; top: 197px;
  width: 527px; height: 1220px;
  background: #fff;
  box-shadow: -1px -1px 4px rgba(0,0,0,.16), 1px 0 3px rgba(0,0,0,.1);
  display: flex; flex-direction: column;
  overflow: hidden;
}
.panel-head {
  height: 82px; flex: none; padding: 6px 12px 0 14px;
  display: flex; justify-content: space-between; border-bottom: 2px solid #ececec;
}
.panel-head h2 { margin: 0; font-size: 27px; font-weight: 400; line-height: 72px; color: #444; letter-spacing: -.3px; }
.view-switch {
  width: 125px; height: 69px; background: #e4e4e4; display: flex; align-items: center;
  position: relative;
}
.view-switch::after {
  content: ""; position: absolute; left: 57px; top: -1px; width: 69px; height: 71px;
  border: 2px solid #f00; border-radius: 6px;
}
.vs-btn { display: flex; align-items: center; justify-content: center; width: 64px; height: 51px; flex: none; }
.vs-btn.active { width: 54px; background: #fff; box-shadow: 0 0 0 6px #d2d2d2; }
.vs-list { width: 36px; height: 20px; }
.vs-dot { fill: none; stroke: #2b6cb8; stroke-width: 2; }
.vs-line { fill: none; stroke: #333; stroke-width: 2.500; }
.vs-grid { width: 24px; height: 24px; }
.panel-search {
  height: 98px; flex: none; padding: 23px 20px 0 21px; border-bottom: 2px solid #ececec;
}
.search {
  height: 54px; border: 2px solid #e6e6e6; display: flex; align-items: center;
  padding-left: 16px; gap: 6px; font-size: 26px; color: #777;
  margin-top: -2px;
}
.search svg { width: 26px; height: 26px; fill: none; stroke: #888; stroke-width: 1.500; }
.panel-body { position: relative; flex: 1; padding: 20px 29px 0 21px; overflow: hidden; }
.scroll-track {
  position: absolute; right: 0; top: 0; bottom: 0; width: 8px; background: #f0f0f0; border-radius: 4px;
}
.scroll-thumb { height: 698px; background: #c9c9c9; border-radius: 4px; }
.sec-row { display: flex; justify-content: space-between; align-items: center; height: 40px; margin-bottom: 21px; }
.sec-row h3 { padding-top: 6px; }
h3 { margin: 0; font-size: 19.500px; font-weight: 400; color: #555; line-height: 24px; letter-spacing: -.1px; }
.sec-title { margin: 23px 0 8px; }
.sec-title.wf { margin: 24px 0 12px; }
.seg { display: flex; }
.seg-btn {
  width: 40px; height: 40px; border: 2px solid #e8e8e8; margin-left: -1px; background: #fff;
  display: flex; align-items: center; justify-content: center;
}
.seg-btn.active { border-color: #1e88e5; border-radius: 3px; position: relative; z-index: 1; }
.seg-btn svg { width: 34px; height: 34px; flex: none; }
.tiles {
  display: grid; grid-template-columns: repeat(6, 72px); column-gap: 9.200px; row-gap: 11.500px;
}
.tiles.tight { row-gap: 10.500px; }
.tile { width: 72px; height: 70px; box-shadow: inset 0 0 0 2px #dcdcdc; position: relative; background: #fff; }
.tile > svg { display: block; width: 72px; height: 70px; }
.tile.off { background: #eee; box-shadow: none; }
.tile.sel { background: #f2f8ff; box-shadow: inset 0 0 0 2px #1e88e5; }
.badge {
  position: absolute; left: 46px; top: 46px; width: 31px; height: 31px; border-radius: 50%;
  background: #fff; box-shadow: 0 1px 4px rgba(0,0,0,.3);
  display: flex; align-items: center; justify-content: center; color: #555; z-index: 1;
}
.badge svg { width: 19px; height: 19px; }
.divider { border: 0; border-top: 2px solid #e8e8e8; margin: 22px 0 19px; }

/* chart */
.chart-wrap { position: relative; z-index: 1; }
.chart { display: block; width: 2588px; height: 1213px; }
.chart text { font-family: "Open Sans", "Liberation Sans", sans-serif; }
.c-title { font-size: 37px; fill: #444; letter-spacing: -.6px; }
.grid { fill: none; stroke: #e8e8e8; stroke-width: 2.500; stroke-dasharray: 3 13; }
.conn { fill: none; stroke: #808080; stroke-width: 3; }
.b-total { fill: #2077b4; }
.b-gold { fill: #e8c46a; }
.b-orange { fill: #f4a460; }
.b-grey { fill: #cbcfd8; }
.axis { fill: none; stroke: #444; stroke-width: 3; }
.line { fill: none; stroke-width: 5; }
.red { stroke: #f00; }
.green { stroke: #80ba00; }
.fill-red { fill: #f00; }
.fill-green { fill: #80ba00; }
.pct text { font-size: 19px; fill: #444; letter-spacing: -.4px; }
.note { font-size: 24px; fill: #ff8c1a; letter-spacing: -.45px; }
.ann { fill: none; stroke: #999; stroke-width: 2; }
.ann-dot { fill: #404040; }
.ann-num { font-size: 24px; fill: #fff; }
.val text { font-size: 20px; fill: #444; letter-spacing: -.7px; }
.val.total text { fill: #111; font-weight: 700; }
.cat text { font-size: 24px; fill: #666; letter-spacing: -.3px; }
.axis-title { font-size: 30px; fill: #555; font-weight: 500; letter-spacing: -.4px; }
```
